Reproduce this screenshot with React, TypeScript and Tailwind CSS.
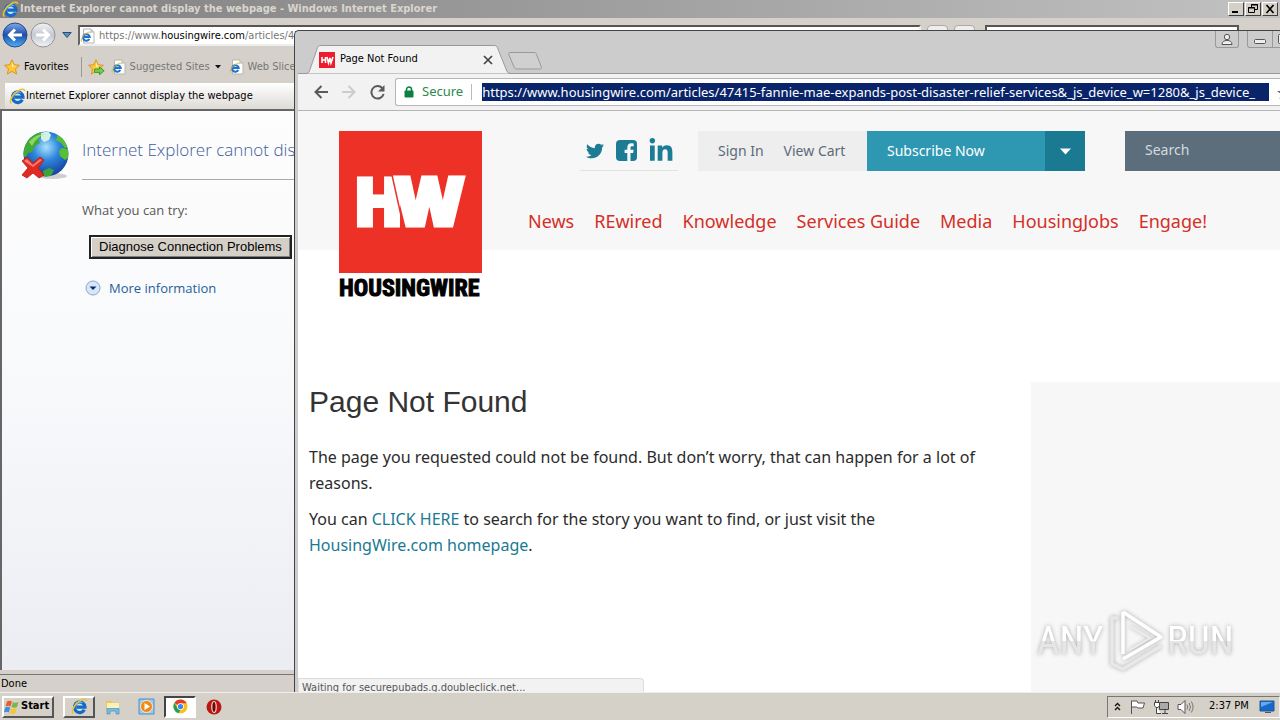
import { useState } from 'react'
import type { ReactNode } from 'react'
import { FaLinkedinIn, FaTwitter } from 'react-icons/fa'

function IeIcon({ className = 'size-4' }: { className?: string }) {
  return (
    <svg viewBox="0 0 16 16" className={className} aria-hidden="true">
      <circle cx="8.2" cy="8.4" r="5" fill="#bfe6fb" />
      <path d="M12.6 11.1A5 5 0 1 1 13.2 8.6H5" fill="none" stroke="#1769c2" strokeWidth="3" />
      <path d="M4 6.4a5 5 0 0 1 7-1.900" fill="none" stroke="#54b4ee" strokeWidth="1.2" />
      <path d="M2.200 14.600C-.6 12.800 4 4.800 9 2.300c3-1.600 5.800-1.600 5.600.7" fill="none" stroke="#e9c238" strokeWidth="1.5" />
    </svg>
  )
}

function PageIcon() {
  return (
    <svg viewBox="0 0 16 16" className="size-4 shrink-0" aria-hidden="true">
      <path d="M3.500 1h7.500l3 3v11H3.500z" fill="#fff" stroke="#b5b5b5" />
      <path d="M11 1v3h3" fill="#ddd" stroke="#b5b5b5" />
      <path d="M9.300 11.100A3.300 3.300 0 1 1 9.700 9H4" fill="none" stroke="#1d74cc" strokeWidth="2" />
      <path d="M1.500 13.500C0 12 3.500 6.500 7.500 4.700c2-.9 3.500-.8 3.300.5" fill="none" stroke="#e0b72e" />
    </svg>
  )
}

function NavArrow({ back }: { back?: boolean }) {
  return (
    <svg viewBox="0 0 26 26" className="size-[26px]" aria-hidden="true">
      <defs>
        <linearGradient id={back ? 'orbBack' : 'orbForward'} x1="0" y1="0" x2="0" y2="1">
          <stop offset="0" stopColor={back ? '#7fa9e6' : '#f2f3f6'} />
          <stop offset=".5" stopColor={back ? '#1c4fae' : '#c3c8d2'} />
          <stop offset="1" stopColor={back ? '#4fb3f4' : '#f3f5f8'} />
        </linearGradient>
      </defs>
      <circle cx="13" cy="13" r="12" fill={back ? 'url(#orbBack)' : 'url(#orbForward)'} stroke={back ? '#274a86' : '#8f939b'} />
      <path d={back ? 'M20 13H8M13 7.500 7.500 13l5.500 5.500' : 'M6 13h12M13 7.500l5.500 5.500-5.500 5.500'} fill="none" stroke="#fff" strokeWidth="3" />
    </svg>
  )
}

function Star({ add }: { add?: boolean }) {
  return (
    <svg viewBox="0 0 17 16" className="h-4 w-[17px] shrink-0" aria-hidden="true">
      <path d="m8 .8 2.200 4.900 5.200.6-3.900 3.500 1.100 5.200L8 12.400 3.400 15l1.100-5.200L.6 6.300l5.200-.6z" fill="#fdc83a" stroke="#d98f1a" strokeWidth=".9" />
      <path d="m8 3 1.400 3.500 3 .4L8 8z" fill="#fff2b0" />
      {add && <path d="M6.500 10h5V7.800l4.700 4-4.700 3.900v-2.300h-5z" fill="#72cf45" stroke="#2f8d27" strokeWidth=".8" />}
    </svg>
  )
}

function Globe() {
  return (
    <svg viewBox="0 0 50 50" className="size-[50px] shrink-0" aria-hidden="true">
      <defs>
        <radialGradient id="sea" cx=".5" cy=".35" r=".65">
          <stop offset="0" stopColor="#a9e2fb" />
          <stop offset=".45" stopColor="#2f86dc" />
          <stop offset="1" stopColor="#153f9c" />
        </radialGradient>
        <clipPath id="disc"><circle cx="25" cy="24" r="22.500" /></clipPath>
      </defs>
      <ellipse cx="31" cy="46" rx="15" ry="3" fill="#cfcfcf" />
      <circle cx="25" cy="24" r="22.500" fill="url(#sea)" />
      <g clipPath="url(#disc)">
        <path d="M2 22C3 11 11 3 19 2l2 4-4 3 2 4-5 3-3 6-4 1-2 4-4-1z" fill="#42ab35" />
        <path d="m20 3 7-2 3 4-2 5-5 2-3-3z" fill="#d3f0e4" />
        <path d="m36 5 6 3 6 9-4 1-4-5-5-3 1-3zM41 18l6 1v9l-3 2-5-4-1-5z" fill="#58bf35" />
        <path d="m22 41 6-3 5 2-3 6-7 1z" fill="#3da43c" />
        <path d="M8 12c5-6 11-8 15-8-5 3-9 6-12 12z" fill="#b1e77c" opacity=".7" />
      </g>
      <path d="m1 31 5-4 6 6 7-6 4 3-6 8 6 7-5 3-6-5-6 5-5-3 6-7z" fill="#e32a22" stroke="#b01d19" strokeWidth=".8" />
      <path d="m3 31 3-2 6 6 7-6 2 1-9 7z" fill="#f67d72" />
    </svg>
  )
}

function CaptionButton({ label, children }: { label: string; children: ReactNode }) {
  return (
    <button aria-label={label} className="flex h-[14px] w-4 items-center justify-center border border-t-white border-r-[#404040] border-b-[#404040] border-l-white bg-[#d4d0c8]">
      <svg viewBox="0 0 12 10" className="h-[10px] w-3" fill="none" stroke="#000" aria-hidden="true">{children}</svg>
    </button>
  )
}

function ExplorerWindow() {
  return (
    <section aria-label="Windows Internet Explorer" className="absolute inset-0 flex flex-col bg-[#d5d0c9] text-[11px] leading-4">
      <header className="flex h-[18px] shrink-0 items-center gap-px bg-linear-to-r from-[#808080] to-[#c2c2c2] pr-0.5 pl-0.5">
        <IeIcon className="size-[17px]" />
        <h1 className="flex-1 font-bold text-[#dad6cf]">Internet Explorer cannot display the webpage - Windows Internet Explorer</h1>
        <CaptionButton label="Minimize"><path d="M2 8h6" strokeWidth="2" /></CaptionButton>
        <CaptionButton label="Restore"><path d="M4.500 3V.5h6v5H8M4 1h7M1.500 3.500h6v5h-6zM1 4h7" /></CaptionButton>
        <CaptionButton label="Close"><path d="m2.500 1 7 8m0-8-7 8" strokeWidth="1.700" /></CaptionButton>
      </header>
      <div className="flex h-[36px] shrink-0 items-start gap-0.5 pt-1 pl-0.5">
        <button aria-label="Back"><NavArrow back /></button>
        <button aria-label="Forward"><NavArrow /></button>
        <button aria-label="Recent pages" className="mt-2.5 ml-1">
          <svg viewBox="0 0 10 6" className="h-1.5 w-2.5"><path d="M.8.5h8.400L5 5.500z" fill="#5b93bf" stroke="#224e78" /></svg>
        </button>
        <div className="mt-[3px] ml-1 flex h-[21px] w-[843px] items-center gap-[3px] border-2 border-t-[#555] border-r-[#eee] border-b-[#eee] border-l-[#666] bg-white">
          <PageIcon />
          <div role="textbox" aria-label="Address" tabIndex={0} className="whitespace-nowrap text-[#777]">https://www.<span className="text-black">housingwire.com</span>/articles/47415-fannie-mae</div>
        </div>
        <button aria-label="Refresh" className="mt-[3px] ml-1 h-5 w-[21px] rounded-sm border border-[#aaa] bg-[#eee]" />
        <button aria-label="Stop" className="mt-[3px] ml-1 h-5 w-[21px] rounded-sm border border-[#aaa] bg-[#eee]" />
        <input aria-label="Search provider" className="mt-[3px] ml-2 h-[21px] w-[254px] border-2 border-[#555] bg-white" />
      </div>
      <div className="flex h-[27px] shrink-0 items-center pb-0.5 pl-1">
        <button className="flex items-center gap-[3px]"><Star />Favorites</button>
        <span className="mr-1.5 ml-3 h-5 w-px border-l border-[#999] bg-white" />
        <button aria-label="Add to Favorites bar" className="mr-1.5"><Star add /></button>
        <button className="mr-2 flex items-center gap-[3px] text-[#777]">
          <PageIcon />Suggested Sites
          <svg viewBox="0 0 6 4" className="ml-0.5 h-1 w-1.5"><path d="M0 0h6L3 3.500z" fill="#111" /></svg>
        </button>
        <button className="flex items-center gap-[3px] whitespace-nowrap text-[#777]"><PageIcon />Web Slice Gallery</button>
      </div>
      <div className="flex h-7 shrink-0 items-end pt-0.5 pl-[5px]">
        <div className="flex h-[26px] w-[330px] items-center bg-linear-to-b from-white to-[#dedbd6] pl-1"><IeIcon className="size-[17px]" />Internet Explorer cannot display the webpage</div>
      </div>
      <main className="flex-1 border-t-2 border-l-2 border-[#666] bg-linear-to-b from-[#fdfdfd] via-[#f8f9fb] to-[#ebedf3] pt-[19px] pl-[19px] font-['Open_Sans',sans-serif]">
        <div className="flex w-[700px]">
          <Globe />
          <div className="ml-[11px] flex flex-1 flex-col items-start">
            <h2 className="w-full border-b border-[#aaa] pt-1.5 pb-4 text-[17px] leading-[27px] font-light text-[#3c5c9c]">Internet Explorer cannot display the webpage</h2>
            <p className="pt-5 text-[13px] leading-5 text-[#575757]">What you can try:</p>
            <button className="mt-[15px] ml-[7px] h-6 border-2 border-[#222] bg-[#d4d0c8] px-2 font-['Liberation_Sans',sans-serif] text-[13px] leading-5 text-black shadow-[inset_1px_1px_0_#fff,inset_-1px_-1px_0_#808080]">Diagnose Connection Problems</button>
            <button className="mt-[19px] ml-[3px] flex items-center gap-2 text-[13px] leading-5 text-[#1f5e9b]">
              <svg viewBox="0 0 16 16" className="size-4"><circle cx="8" cy="8" r="7" fill="#d5e8fb" stroke="#8aa6cb" /><path d="M4.500 6.500h7L8 10z" fill="#102a66" /></svg>
              More information
            </button>
          </div>
        </div>
      </main>
      <footer className="mt-1 flex h-[18px] shrink-0 items-center border-t border-[#777] pl-px">Done</footer>
    </section>
  )
}

function SiteHeader() {
  return (
    <header className="flex h-[139px] shrink-0 items-start bg-[#f7f7f8] pt-5 pl-[41px]">
      <a href="#home" aria-label="HousingWire" className="w-[143px] shrink-0">
        <svg viewBox="0 0 143 168" className="w-[143px] overflow-visible">
          <path d="M0 0h143v142H0z" fill="#ee3127" />
          <g fill="#fff" stroke="#fff" fontWeight="900">
            <text x="17" y="94" fontSize="64" strokeWidth="5" className="font-['Roboto',sans-serif]">H</text>
            <text x="56" y="94" fontSize="66" strokeWidth="5" className="font-['Open_Sans',sans-serif]">W</text>
          </g>
          <path d="m53 44 12 54" stroke="#ee3127" strokeWidth="1.500" />
          <text x="0" y="165" fontSize="24" fontWeight="700" fill="#000" stroke="#000" strokeWidth="1" className="font-['Roboto_Condensed',sans-serif]">HOUSINGWIRE</text>
        </svg>
      </a>
      <div className="ml-[46px] flex min-w-0 flex-1 flex-col">
        <div className="flex h-10 text-[14px] leading-5 text-[#5b6b79]">
          <div className="ml-[52px] flex w-[98px] shrink-0 items-center justify-between border-b border-[#e2e2e2] pr-1 pl-1.5 text-[#1b7c94]">
            <a href="#twitter" aria-label="Twitter"><FaTwitter className="size-[18px]" /></a>
            <a href="#facebook" aria-label="Facebook"><svg viewBox="0 0 21 21" className="size-[21px]"><rect width="21" height="21" rx="4" fill="currentColor" /><path d="M11.300 21v-8H8.600V9.800h2.700V7.500c0-2.700 1.600-4.200 4-4.200l2.400.1v2.900H16c-1.200 0-1.500.6-1.500 1.500v2h3.100l-.4 3.200h-2.700v8z" fill="#f7f7f8" /></svg></a>
            <a href="#linkedin" aria-label="LinkedIn"><FaLinkedinIn className="size-[26px]" /></a>
          </div>
          <div className="ml-5 flex w-[169px] shrink-0 items-center gap-5 bg-[#eee] pl-5">
            <a href="#signin">Sign In</a><a href="#cart">View Cart</a>
          </div>
          <button className="w-[178px] shrink-0 bg-[#2e98b2] pl-5 text-left text-white">Subscribe Now</button>
          <button aria-label="Subscribe options" className="flex w-10 shrink-0 items-center justify-center bg-[#197a92]">
            <svg viewBox="0 0 11 7" className="h-[7px] w-[11px]"><path d="M0 .5h11L5.500 6.500z" fill="#fff" /></svg>
          </button>
          <input aria-label="Search" placeholder="Search" className="ml-10 min-w-0 flex-1 bg-[#5c6e7c] pb-0.5 pl-5 text-white outline-none placeholder:text-[#d5dade]" />
        </div>
        <nav className="mt-9 flex gap-5 text-[18px] leading-7 whitespace-nowrap text-[#d42f26]">
          {['News', 'REwired', 'Knowledge', 'Services Guide', 'Media', 'HousingJobs', 'Engage!'].map((item) => <a key={item} href="#section">{item}</a>)}
        </nav>
      </div>
    </header>
  )
}

function Watermark() {
  return (
    <svg viewBox="0 0 200 66" className="absolute right-[44px] bottom-[18px] w-[200px] drop-shadow-[0_0_2px_#aaa]" aria-label="ANY RUN">
      <defs>
        <linearGradient id="pale" x1="0" y1="0" x2="0" y2="1">
          <stop offset=".5" stopColor="#fff" /><stop offset=".5" stopColor="#e6e6e6" />
        </linearGradient>
      </defs>
      <g fill="url(#pale)" fontSize="39" className="font-['Roboto_Condensed','Roboto',sans-serif]">
        <text x="1" y="46">ANY</text><text x="131" y="46">RUN</text>
      </g>
      <g fill="none" stroke="#fff" strokeWidth="3.500" strokeLinejoin="round">
        <path d="M87 4v42M87 4l38 25-38 22" /><path d="M94 18l20 12-20 12" stroke="#ececec" strokeWidth="2" /><path d="M82 10h-6v46l11 5 38-23" stroke="#e8e8e8" />
      </g>
    </svg>
  )
}

function ChromeWindow() {
  const [url, setUrl] = useState('https://www.housingwire.com/articles/47415-fannie-mae-expands-post-disaster-relief-services&_js_device_w=1280&_js_device_')
  return (
    <section aria-label="Page Not Found" className="absolute top-[30px] right-0 bottom-0 left-[294px] flex flex-col overflow-hidden rounded-tl-[5px] border-t border-l border-[#444] bg-[#ccc] pl-[3px]">
      <header className="flex h-[43px] shrink-0 items-end border-b border-[#999]">
        <div className="relative -mb-px ml-2 flex h-[29px] w-[205px] items-center pl-[13px] text-[11px]">
          <svg viewBox="0 0 205 29" className="absolute inset-0 h-[29px] w-[205px]" aria-hidden="true"><path d="M0 28.500c3 0 3-2 4-4L11 4c1-3 2-3.500 4-3.500h173c2 0 3 .5 4 3.500l8 20c1 3 2 4.500 5 4.500" fill="#f2f2f2" stroke="#999" /></svg>
          <svg viewBox="0 0 16 16" className="relative size-4" aria-hidden="true"><path d="M0 0h16v16H0z" fill="#ee1c2e" /><path d="M3 5v6m3.500-6v6M3 8h3.500M8 5l1.500 6 1.500-5 1 5 2-6" fill="none" stroke="#fff" strokeWidth="1.600" /></svg>
          <span className="relative ml-[5px] flex-1">Page Not Found</span>
          <button aria-label="Close tab" className="relative mr-[18px]"><svg viewBox="0 0 10 10" className="size-2.5"><path d="m1 1 8 8m0-8L1 9" stroke="#444" strokeWidth="1.700" /></svg></button>
        </div>
        <button aria-label="New tab" className="-ml-1 mb-[3px]"><svg viewBox="0 0 36 18" className="h-[18px] w-9"><path d="M3 .5h24c1.500 0 2 .5 2.500 2L34 14c.8 2 .5 3-1 3H10c-1.500 0-2.500-.6-3-2L2 3C1.400 1.300 1.500.5 3 .5z" fill="#d0d0d0" stroke="#999" /></svg></button>
        <div className="ml-auto flex h-[17px] self-start text-[#555]">
          <button aria-label="Profile" className="flex w-6 items-center justify-center rounded-b-[3px] border border-t-0 border-[#999]"><svg viewBox="0 0 12 12" className="size-3" fill="#eee" stroke="#555"><path d="M1 11.500c0-3 2-4 5-4s5 1 5 4z" /><circle cx="6" cy="4" r="2.700" /></svg></button>
          <button aria-label="Minimize window" className="ml-2 flex w-[26px] items-center justify-center rounded-bl-[3px] border border-t-0 border-[#999]"><svg viewBox="0 0 12 5" className="mt-1 h-[5px] w-3"><rect x=".5" y=".5" width="11" height="4" rx="1" fill="#eee" stroke="#555" /></svg></button>
          <button aria-label="Maximize window" className="flex w-[7px] items-center overflow-hidden border-b border-[#999] pl-[5px]"><svg viewBox="0 0 10 10" className="size-2.5 shrink-0"><rect x=".5" y=".5" width="9" height="9" rx="1" fill="#eee" stroke="#555" /></svg></button>
        </div>
      </header>
      <div className="flex h-[37px] shrink-0 items-center border-b border-[#b5b5b5] bg-[#f2f2f2] pl-4 font-['Noto_Sans',sans-serif] text-[13px]">
        <button aria-label="Go back" className="mr-3.5"><svg viewBox="0 0 14 14" className="size-3.5"><path d="M14 7H2M7.500 1 1.500 7l6 6" fill="none" stroke="#5a5a5a" strokeWidth="2" /></svg></button>
        <button aria-label="Go forward" className="mr-3.5"><svg viewBox="0 0 14 14" className="size-3.5"><path d="M0 7h12M6.500 1l6 6-6 6" fill="none" stroke="#ccc" strokeWidth="2" /></svg></button>
        <button aria-label="Reload" className="mr-2.5"><svg viewBox="0 0 15 15" className="size-[15px]"><path d="M12.300 3.200A6.200 6.200 0 1 0 13.600 9" fill="none" stroke="#5a5a5a" strokeWidth="2" /><path d="M14.500 0v6.500H8z" fill="#5a5a5a" /></svg></button>
        <div className="flex h-7 min-w-0 flex-1 items-center rounded-l-[3px] border border-r-0 border-[#b6b6b6] bg-white pl-2">
          <svg viewBox="0 0 10 12" className="h-3 w-2.5 shrink-0"><path d="M2.500 5V3.500a2.500 2.500 0 0 1 5 0V5" fill="none" stroke="#0b8043" strokeWidth="1.500" /><rect x=".5" y="4.500" width="9" height="7" rx="1" fill="#0b8043" /></svg>
          <label htmlFor="omnibox" className="ml-2 text-[#2c8a4b]">Secure</label>
          <span className="mr-2.5 ml-2 h-4 w-px shrink-0 bg-[#bbb]" />
          <input id="omnibox" value={url} onChange={(e) => setUrl(e.target.value)} className="h-[18px] min-w-0 flex-1 bg-[#0a246a] p-0 leading-[18px] text-white outline-none" />
          <button aria-label="Bookmark this page" className="ml-2 w-[3px] shrink-0 overflow-hidden"><svg viewBox="0 0 14 14" className="size-3.5"><path d="M0 6h5l2-5 2 5h5l-4 3 1.500 5L7 11l-4.500 3L4 9z" fill="#666" /></svg></button>
        </div>
      </div>
      <div className="flex min-h-0 flex-1 flex-col bg-white font-['Noto_Sans',sans-serif] text-[#2b2b2b]">
        <SiteHeader />
        <div className="mt-[132px] flex min-h-0 flex-1">
          <main className="flex-1 pr-10 pl-[11px] text-[16px] leading-[26px]">
            <h1 className="font-['Liberation_Sans',sans-serif] text-[30px] leading-10 text-[#333]">Page Not Found</h1>
            <p className="mt-[22px]">The page you requested could not be found. But don’t worry, that can happen for a lot of reasons.</p>
            <p className="mt-2.5">You can <a href="#search" className="text-[#197a92]">CLICK HERE</a> to search for the story you want to find, or just visit the <a href="#home" className="text-[#197a92]">HousingWire.com homepage</a>.</p>
          </main>
          <aside aria-label="Advertisement" className="w-[249px] shrink-0 bg-[#f7f7f8]" />
        </div>
      </div>
      <div role="status" className="absolute bottom-0 left-[3px] h-[14px] w-[346px] overflow-hidden rounded-tr-[4px] border border-b-0 border-[#ddd] bg-[#f2f2f2] pl-[3px] text-[11px] leading-[18px] text-[#555]">Waiting for securepubads.g.doubleclick.net...</div>
      <Watermark />
    </section>
  )
}

function Taskbar() {
  return (
    <footer className="relative flex h-7 shrink-0 items-center border-t border-[#eee] bg-[#d5d0c8] pl-0.5 text-[11px]">
      <button className="flex h-[22px] w-[52px] items-center gap-px border-2 border-t-white border-r-[#555] border-b-[#555] border-l-white font-bold">
        <svg viewBox="0 0 16 16" className="size-4 shrink-0"><path d="M3 2.500c2-1.200 3.500-1 5 0L6.500 7.500c-1.600-1-3-1-5 0z" fill="#ee5b2b" /><path d="M9 3c2 1.200 3.500 1 5.500 0L13 8c-2 1-3.500 1-5.500 0z" fill="#79b943" /><path d="M1.200 8.700c2-1.200 3.500-1 5 0L4.800 13.500c-1.500-1-3-1-5 0z" fill="#3d8de0" /><path d="M7.200 9.200c2 1.200 3.500 1 5.500 0l-1.500 5c-2 1-3.500 1-5.500 0z" fill="#f8c432" /></svg>
        Start
      </button>
      <button aria-label="Internet Explorer" className="ml-[9px] flex h-[22px] w-8 items-center justify-center border-2 border-t-white border-r-[#555] border-b-[#555] border-l-white"><IeIcon className="size-[17px]" /></button>
      <button aria-label="Windows Explorer" className="ml-[9px]"><svg viewBox="0 0 18 16" className="h-4 w-[18px]"><path d="M2 2h5l1 1.500h7V12H2z" fill="#e8c65b" /><path d="M3 4h12v6H3z" fill="#fbf1ba" /><path d="M3 15V9.500h12V15h-3v-3H6v3z" fill="#74bde4" stroke="#4894c0" strokeWidth=".7" /></svg></button>
      <button aria-label="Media Player" className="ml-4"><svg viewBox="0 0 17 17" className="size-[17px]"><path d="M1 1h15v15H1z" fill="#9bcbea" stroke="#4a8fc8" /><circle cx="8.500" cy="8.500" r="6" fill="#f28a17" stroke="#fff" strokeWidth=".7" /><path d="M6.500 5v7l5.500-3.500z" fill="#fff" /></svg></button>
      <button aria-label="Chrome" className="ml-[9px] flex h-[22px] w-8 items-center justify-center border-2 border-t-[#444] border-r-white border-b-white border-l-[#444] bg-white"><svg viewBox="0 0 16 16" className="size-[15px]"><circle cx="8" cy="8" r="7.500" fill="#fbc116" /><path d="M8 8 1.500 4.200A7.500 7.500 0 0 1 14.500 4.500H8z" fill="#e33b2e" /><path d="M1.500 4.200 5 10l3 1.500-2.200 3.700A7.500 7.500 0 0 1 1.500 4.200z" fill="#1da05a" /><circle cx="8" cy="8" r="3.600" fill="#fff" /><circle cx="8" cy="8" r="2.800" fill="#4285f4" /></svg></button>
      <button aria-label="Opera" className="ml-[10px]"><svg viewBox="0 0 16 16" className="size-4"><circle cx="8" cy="8" r="7.500" fill="#ba1712" /><ellipse cx="8" cy="8" rx="2.200" ry="5.500" fill="#6a0805" stroke="#f9d9d5" strokeWidth="1.200" /></svg></button>
      <div className="ml-auto flex h-[22px] w-[173px] items-center border border-t-[#777] border-r-[#eee] border-b-white border-l-[#777] pl-1.5">
        <button aria-label="Show hidden icons"><svg viewBox="0 0 7 9" className="h-[9px] w-[7px]"><path d="m1 4 2.500-2.500L6 4M1 8l2.500-2.500L6 8" fill="none" stroke="#111" strokeWidth="1.300" /></svg></button>
        <svg viewBox="0 0 17 16" className="ml-2 h-4 w-[17px]" aria-label="Action Center"><path d="M2.500 15V1.500M3 2h5l1 2h6.500l-1.500 5H9L7.500 8H3" fill="#fff" stroke="#555" /></svg>
        <svg viewBox="0 0 17 16" className="ml-[7px] h-4 w-[17px]" aria-label="Network"><path d="M6.500 3.500h9v7h-9z" fill="#aaa" stroke="#444" /><path d="M9 14.500h6M12 11v3M3.500 8v6.500H8M1.500 3.500h5v3L5 8.500H3L1.500 6.500zM2.500 1v3m3-3v3" fill="#fff" stroke="#444" /></svg>
        <svg viewBox="0 0 17 16" className="ml-[7px] h-4 w-[17px]" aria-label="Volume"><path d="M1 5.500h3l4-4v13l-4-4H1z" fill="#fff" stroke="#555" /><path d="M10 5.500q1.500 2.500 0 5M12.200 4q2.500 4 0 8M14.300 2.500q3.500 5.500 0 11" fill="none" stroke="#777" /></svg>
        <time className="ml-[15px] whitespace-nowrap">2:37 PM</time>
        <button aria-label="Show desktop" className="mr-1 ml-auto"><svg viewBox="0 0 16 14" className="h-3.5 w-4"><path d="M1 1h14v10H1z" fill="#1768cd" stroke="#27548c" /><path d="M2 2h12L2 7z" fill="#65a8ef" /><path d="M6 12.500h6" stroke="#555" /></svg></button>
      </div>
    </footer>
  )
}

export default function App() {
  return (
    <div className="flex h-screen flex-col overflow-hidden bg-[#d5d0c9] font-['DejaVu_Sans_Condensed','DejaVu_Sans',sans-serif] text-black">
      <div className="relative min-h-0 flex-1">
        <ExplorerWindow />
        <ChromeWindow />
      </div>
      <Taskbar />
    </div>
  )
}
